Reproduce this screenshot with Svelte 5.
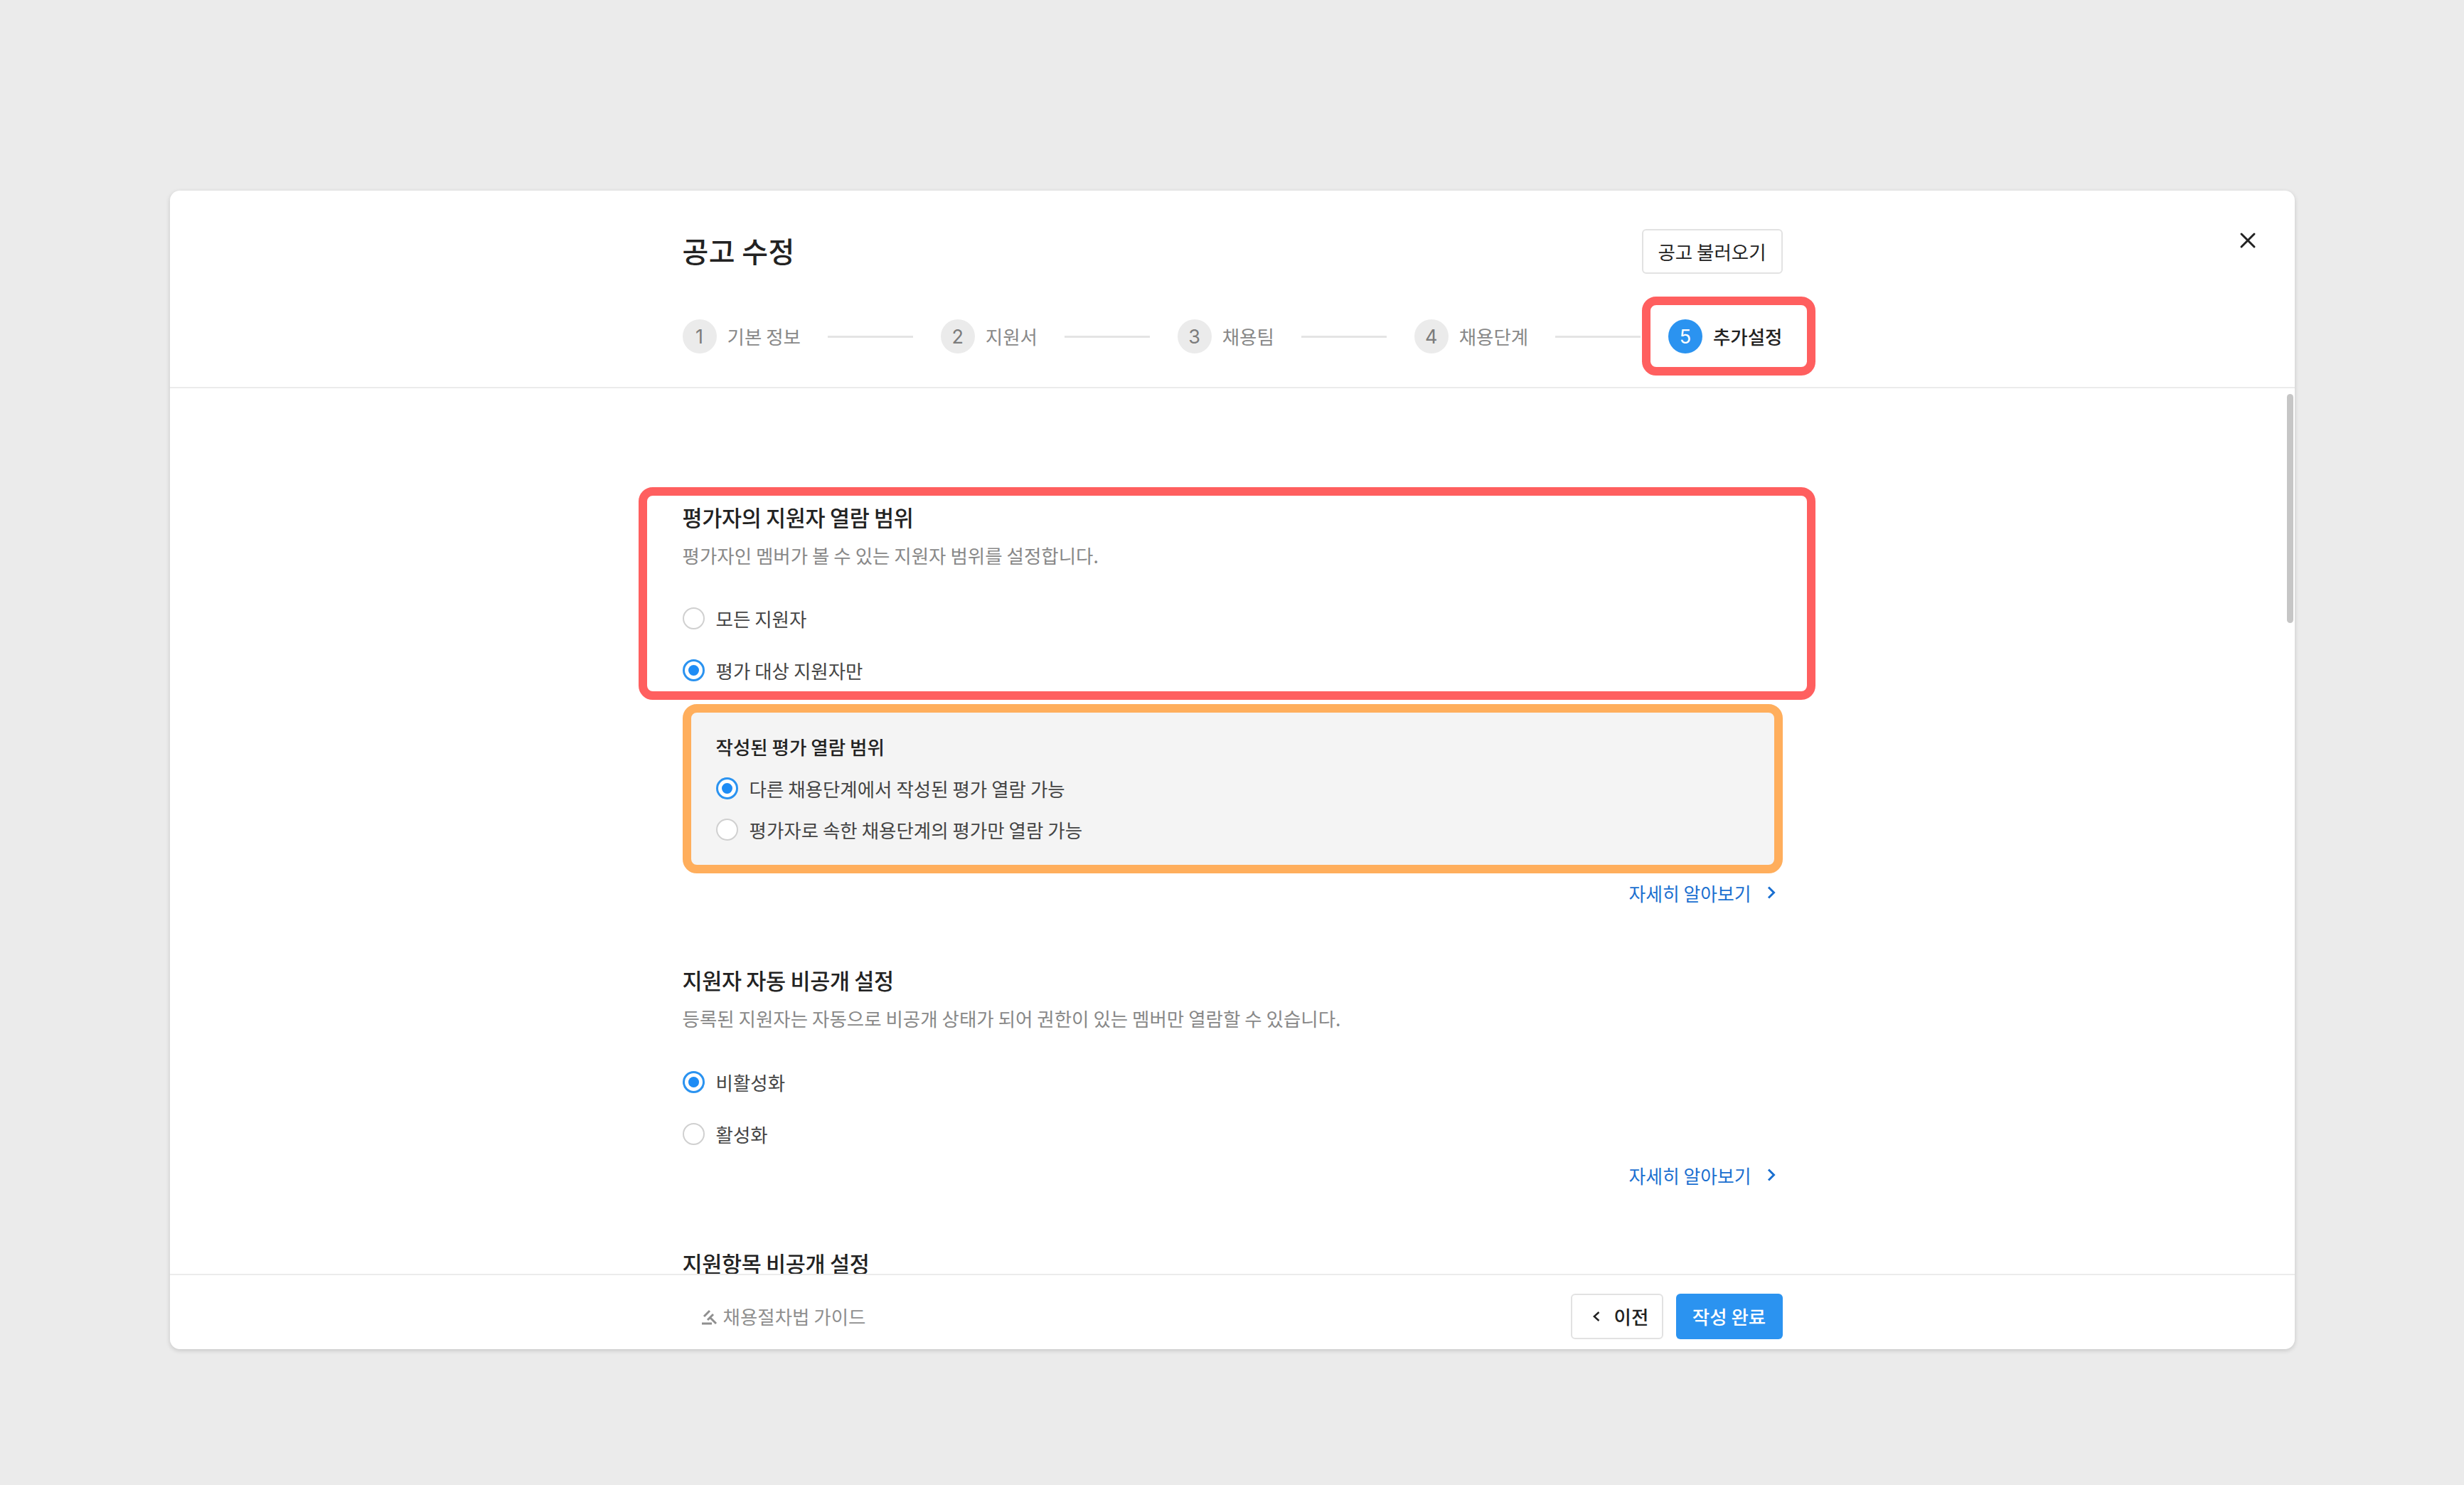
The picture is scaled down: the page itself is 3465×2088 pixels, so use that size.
<script>
  const steps = [
    { n: 1, label: "기본 정보" },
    { n: 2, label: "지원서" },
    { n: 3, label: "채용팀" },
    { n: 4, label: "채용단계" },
    { n: 5, label: "추가설정", active: true },
  ];
</script>

{#snippet radio(label, checked)}
  <div class="radio">
    <span class="dot" class:checked></span>
    <span>{label}</span>
  </div>
{/snippet}

{#snippet more()}
  <div class="more">
    <span>자세히 알아보기</span>
    <svg width="12" height="18" viewBox="0 0 12 18" fill="none">
      <path d="M2 1.5l7.5 7.5L2 16.5" stroke="#1a6fd0" stroke-width="3" />
    </svg>
  </div>
{/snippet}

<div class="page">
  <div class="modal">
    <header>
      <div class="inner">
        <div class="title-row">
          <h1>공고 수정</h1>
          <button class="btn">공고 불러오기</button>
        </div>
        <div class="steps">
          {#each steps as s, i}
            {#if i > 0}<span class="line"></span>{/if}
            <div class="step" class:active={s.active}>
              <span class="num">{s.n}</span>
              <span class="step-label">{s.label}</span>
              {#if s.active}<span class="mark-step"></span>{/if}
            </div>
          {/each}
        </div>
      </div>
      <svg class="close" width="24" height="24" viewBox="0 0 24 24" fill="none">
        <path d="M3 3l18 18M21 3L3 21" stroke="#222" stroke-width="3" stroke-linecap="round" />
      </svg>
    </header>

    <main>
      <div class="inner">
        <section class="first">
          <span class="mark-red"></span>
          <h2>평가자의 지원자 열람 범위</h2>
          <p>평가자인 멤버가 볼 수 있는 지원자 범위를 설정합니다.</p>
          <div class="radios">
            {@render radio("모든 지원자", false)}
            {@render radio("평가 대상 지원자만", true)}
          </div>
        </section>

        <div class="panel">
          <h3>작성된 평가 열람 범위</h3>
          <div class="panel-radios">
            {@render radio("다른 채용단계에서 작성된 평가 열람 가능", true)}
            {@render radio("평가자로 속한 채용단계의 평가만 열람 가능", false)}
          </div>
        </div>
        {@render more()}

        <section class="second">
          <h2>지원자 자동 비공개 설정</h2>
          <p>등록된 지원자는 자동으로 비공개 상태가 되어 권한이 있는 멤버만 열람할 수 있습니다.</p>
          <div class="radios">
            {@render radio("비활성화", true)}
            {@render radio("활성화", false)}
          </div>
        </section>
        {@render more()}

        <section class="third">
          <h2>지원항목 비공개 설정</h2>
        </section>
      </div>
      <span class="scrollbar"></span>
    </main>

    <footer>
      <div class="inner foot">
        <div class="guide">
          <svg width="24" height="24" viewBox="0 0 24 24" fill="none" stroke="#8f8f8f" stroke-width="3">
            <path d="M4 12l8-8M9 17l8-8M13 14l8 8M1 22h14" />
          </svg>
          <span>채용절차법 가이드</span>
        </div>
        <div class="actions">
          <button class="btn prev">
            <svg width="10" height="16" viewBox="0 0 10 16" fill="none">
              <path d="M8.5 2L1.8 8l6.7 6" stroke="#222" stroke-width="2.4" />
            </svg>
            이전
          </button>
          <button class="btn primary">작성 완료</button>
        </div>
      </div>
    </footer>
  </div>
</div>

<style>
  :global(body) {
    margin: 0;
    background: #ebebeb;
    font-family: "Noto Sans CJK KR", "Noto Sans", sans-serif;
    color: #222;
  }

  .page {
    box-sizing: border-box;
    height: 2088px;
    padding: 268px 238px 191px 239px;
  }

  .modal {
    height: 100%;
    background: #fff;
    border-radius: 14px;
    box-shadow: 0 2px 6px rgba(0, 0, 0, 0.16);
    display: flex;
    flex-direction: column;
    overflow: hidden;
  }

  .inner {
    width: 1547px;
    margin: 0 auto;
  }

  header {
    position: relative;
    height: 278px;
    flex: none;
    box-sizing: border-box;
    border-bottom: 2px solid #ebebeb;
  }

  .title-row {
    display: flex;
    justify-content: space-between;
    align-items: center;
    padding-top: 54px;
    height: 63px;
  }

  h1 {
    margin: 0;
    font-size: 40px;
    font-weight: 500;
    line-height: 63px;
    letter-spacing: 0.4px;
    position: relative;
    top: -1px;
  }

  .btn {
    font: inherit;
    font-size: 26.5px;
    height: 63px;
    box-sizing: border-box;
    background: #fff;
    color: #222;
    border: 2px solid #e2e2e2;
    border-radius: 6px;
    padding: 0;
    width: 198px;
    white-space: nowrap;
  }

  .steps {
    display: flex;
    align-items: center;
    margin-top: 64px;
    height: 48px;
  }

  .step {
    position: relative;
    display: flex;
    align-items: center;
    gap: 15px;
    font-size: 26.5px;
    color: #888;
    white-space: nowrap;
  }

  .step-label {
    position: relative;
    top: -1px;
  }

  .step.active {
    color: #222;
    font-weight: 500;
  }

  .num {
    width: 48px;
    height: 48px;
    border-radius: 50%;
    background: #ebebeb;
    color: #7c7c7c;
    display: flex;
    align-items: center;
    justify-content: center;
    font-family: "Inter", sans-serif;
    font-weight: 400;
    font-size: 27px;
  }

  .active .num {
    background: #2b93f0;
    color: #fff;
  }

  .line {
    flex: 1;
    height: 3px;
    background: #e4e4e4;
    margin: 0 39px 0 38px;
  }

  .mark-step {
    position: absolute;
    left: -37px;
    right: -46px;
    top: -32px;
    bottom: -31px;
    border: 12px solid #ff5f5f;
    border-radius: 20px;
  }

  .close {
    position: absolute;
    top: 58px;
    right: 54px;
  }

  main {
    position: relative;
    flex: 1;
    min-height: 0;
    overflow: hidden;
  }

  section {
    position: relative;
  }

  .first {
    padding-top: 160px;
  }

  .mark-red {
    position: absolute;
    left: -62px;
    right: -46px;
    top: 139px;
    bottom: -22px;
    border: 12px solid #ff5f5f;
    border-radius: 20px;
  }

  h2 {
    margin: 0;
    font-size: 30.5px;
    font-weight: 500;
    line-height: 42px;
    letter-spacing: -0.3px;
  }

  p {
    margin: 13px 0 0;
    font-size: 26.5px;
    line-height: 40px;
    color: #888;
  }

  .radios {
    margin-top: 48px;
    display: flex;
    flex-direction: column;
    gap: 33px;
  }

  .radio {
    display: flex;
    align-items: center;
    gap: 16px;
    height: 40px;
    font-size: 26.5px;
    color: #444;
  }

  .dot {
    box-sizing: border-box;
    width: 31px;
    height: 31px;
    flex: none;
    border-radius: 50%;
    border: 2px solid #d0d0d0;
    background: #fff;
    position: relative;
  }

  .dot.checked {
    border: 3px solid #2b93f0;
  }

  .dot.checked::after {
    content: "";
    position: absolute;
    inset: 5px;
    border-radius: 50%;
    background: #1e8cf5;
  }

  .panel {
    box-sizing: border-box;
    height: 238px;
    margin-top: 28px;
    padding: 28px 0 0 35px;
    background: #f4f4f4;
    border: 12px solid #ffae5c;
    border-radius: 20px;
  }

  h3 {
    margin: 0;
    font-size: 26.5px;
    font-weight: 500;
    line-height: 40px;
  }

  .panel-radios {
    margin-top: 18px;
    display: flex;
    flex-direction: column;
    gap: 18px;
  }

  .more {
    display: flex;
    justify-content: flex-end;
    align-items: center;
    gap: 22px;
    height: 40px;
    margin-top: 7px;
    padding-right: 10px;
    font-size: 25.8px;
    color: #1a6fd0;
  }

  .second {
    padding-top: 82px;
    margin-bottom: 18px;
  }

  .second .radios {
    margin-top: 49px;
  }

  .third {
    padding-top: 83px;
  }

  .scrollbar {
    position: absolute;
    top: 8px;
    right: 2px;
    width: 9px;
    height: 322px;
    border-radius: 5px;
    background: #c6c6c6;
  }

  footer {
    flex: none;
    height: 106px;
    box-sizing: border-box;
    border-top: 2px solid #ebebeb;
  }

  .foot {
    box-sizing: border-box;
    height: 100%;
    padding-top: 11px;
    display: flex;
    justify-content: space-between;
    align-items: center;
  }

  .guide {
    display: flex;
    align-items: center;
    gap: 7px;
    padding-left: 26px;
    font-size: 26.5px;
    color: #8f8f8f;
  }

  .actions {
    display: flex;
    gap: 18px;
  }

  .btn.prev {
    width: 130px;
    height: 64px;
    display: flex;
    align-items: center;
    gap: 20px;
    padding-left: 29px;
    font-weight: 500;
  }

  .btn.primary {
    width: 150px;
    height: 64px;
    background: #2b93f0;
    border: none;
    color: #fff;
    font-weight: 500;
  }
</style>
